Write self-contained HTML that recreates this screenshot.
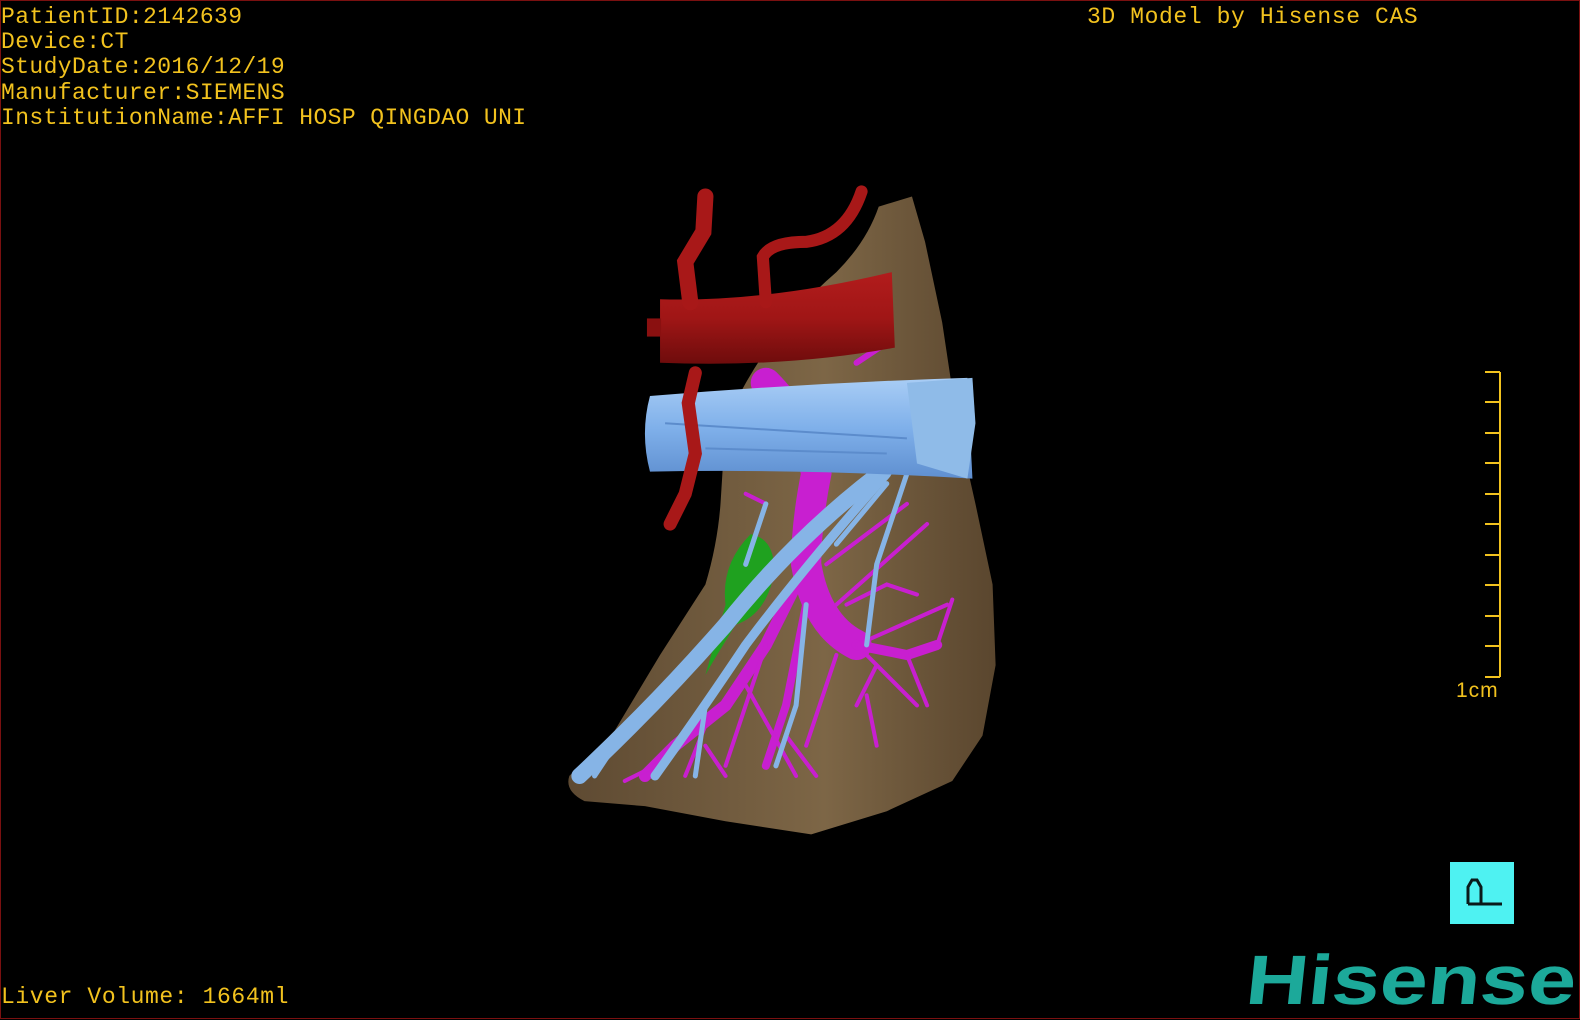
<!DOCTYPE html>
<html><head><meta charset="utf-8"><style>
html,body{margin:0;padding:0;background:#000;width:1580px;height:1020px;overflow:hidden}
#frame{position:absolute;left:0;top:0;width:1578px;height:1017px;border:1px solid #7a1010;}
.t{position:absolute;font-family:"Liberation Mono",monospace;color:#f2c21e;font-size:23px;line-height:25.2px;white-space:pre;letter-spacing:0.4px}
</style></head><body>
<svg width="1580" height="1020" style="position:absolute;left:0;top:0">
<defs>
<linearGradient id="liv" x1="0" y1="0" x2="1" y2="0"><stop offset="0" stop-color="#5e4a32"/><stop offset="0.6" stop-color="#7d6646"/><stop offset="1" stop-color="#5a462e"/></linearGradient>
<linearGradient id="ivc" x1="0" y1="0" x2="0" y2="1"><stop offset="0" stop-color="#a9cdf5"/><stop offset="0.5" stop-color="#7fb0ea"/><stop offset="1" stop-color="#5f8fd0"/></linearGradient>
<linearGradient id="ao" x1="0" y1="0" x2="0" y2="1"><stop offset="0" stop-color="#b21c1c"/><stop offset="0.5" stop-color="#a01616"/><stop offset="1" stop-color="#6e0c0c"/></linearGradient>
</defs>
<g transform="scale(1.0077)">
<path d="M565,770 Q590,745 610,725 L655,650 L700,580 Q712,540 715,500 L720,420 Q760,330 830,270 Q860,240 872,205 L905,195 L918,240 L935,320 L950,420 L968,500 L985,580 L988,660 L975,730 L945,775 L880,805 L805,828 L720,815 L640,800 L580,795 Q560,785 565,770 Z" fill="url(#liv)"/>
<path d="M745,530 Q770,535 768,570 Q760,610 730,620 Q705,660 700,670 L720,600 Q715,560 745,530Z" fill="#1fa11f"/>
<g stroke="#c81fd0" fill="none" stroke-linecap="round">
<path d="M760,380 Q800,420 810,470 Q800,520 800,560 Q810,620 850,640" stroke-width="30"/>
<path d="M800,560 L760,640 L720,700 L670,740 L640,770" stroke-width="12"/>
<path d="M850,640 L900,650 L930,640" stroke-width="10"/>
<path d="M800,600 L780,700 L760,760" stroke-width="8"/>
<path d="M850,640 L940,600 M860,650 L910,700 M830,650 L800,740 M830,600 L920,520 M820,560 L900,500 M760,640 L740,700 L720,760 M700,720 L680,770 M740,680 L790,770 M760,500 L740,490 M870,660 L850,700 M900,650 L920,700 M930,640 L945,595 M840,600 L880,580 L910,590 M650,760 L620,775 M700,740 L720,770 M780,730 L810,770 M860,690 L870,740" stroke-width="4"/>
<path d="M830,330 L880,290 M850,360 L880,340" stroke-width="6"/>
</g>
<g stroke="#86b4e6" fill="none" stroke-linecap="round">
<path d="M900,450 Q800,520 720,620 Q650,700 575,770" stroke-width="16"/>
<path d="M880,470 Q800,560 740,640 Q700,700 650,770" stroke-width="9"/>
<path d="M900,470 L870,560 L860,640 M880,480 L830,540 M800,600 L790,700 L770,760 M700,700 L690,770 M740,560 L760,500 M610,740 L590,770" stroke-width="5"/>
</g>
<path d="M655,297 Q760,300 885,270 L888,345 Q780,365 655,360 Z" fill="url(#ao)"/>
<rect x="642" y="316" width="14" height="18" fill="#8a1010"/>
<g stroke="#a81818" fill="none" stroke-linecap="round">
<path d="M700,195 L698,230 L680,260 L685,300" stroke-width="16"/>
<path d="M760,300 L757,255 Q765,240 800,240 Q840,235 855,190" stroke-width="12"/>
</g>
<path d="M645,393 Q800,380 960,375 L965,475 Q800,465 645,468 Q635,430 645,393Z" fill="url(#ivc)"/>
<path d="M900,380 L965,375 L968,420 L960,475 L910,460 Z" fill="#8fbbe8"/>
<path d="M660,420 L900,435 M700,445 L880,450" stroke="#5c8ccc" stroke-width="2"/>
<path d="M690,370 L683,400 L690,450 L680,490 L665,520" stroke="#a81818" stroke-width="13" fill="none" stroke-linecap="round"/>
</g>
<g stroke="#f2c21e" stroke-width="2" fill="none">
<path d="M1500,372 V677"/>
<path d="M1485,372H1500M1485,402H1500M1485,433H1500M1485,463H1500M1485,494H1500M1485,524H1500M1485,555H1500M1485,585H1500M1485,616H1500M1485,646H1500M1485,677H1500"/>
</g>
<text x="1456" y="697" font-family="Liberation Sans,sans-serif" font-size="21" fill="#f2c21e" letter-spacing="1">1cm</text>
<rect x="1450" y="862" width="64" height="62" fill="#4ef2f2"/>
<path d="M1468,904 V887 L1472,880 H1477 L1481,887 V904 M1468,904 H1502" stroke="#0a1a1a" stroke-width="3" fill="none"/>
<text x="0" y="0" transform="translate(1244,1004) skewX(-6)" font-family="Liberation Sans,sans-serif" font-weight="bold" font-size="70" fill="#1ca99a" textLength="330" lengthAdjust="spacingAndGlyphs">Hisense</text>
</svg>
<div id="frame"></div>
<div class="t" style="left:1px;top:5px">PatientID:2142639
Device:CT
StudyDate:2016/12/19
Manufacturer:SIEMENS
InstitutionName:AFFI HOSP QINGDAO UNI</div>
<div class="t" style="left:1087px;top:5px;letter-spacing:0.6px">3D Model by Hisense CAS</div>
<div class="t" style="left:1px;top:985px;letter-spacing:0.6px">Liver Volume: 1664ml</div>
</body></html>
